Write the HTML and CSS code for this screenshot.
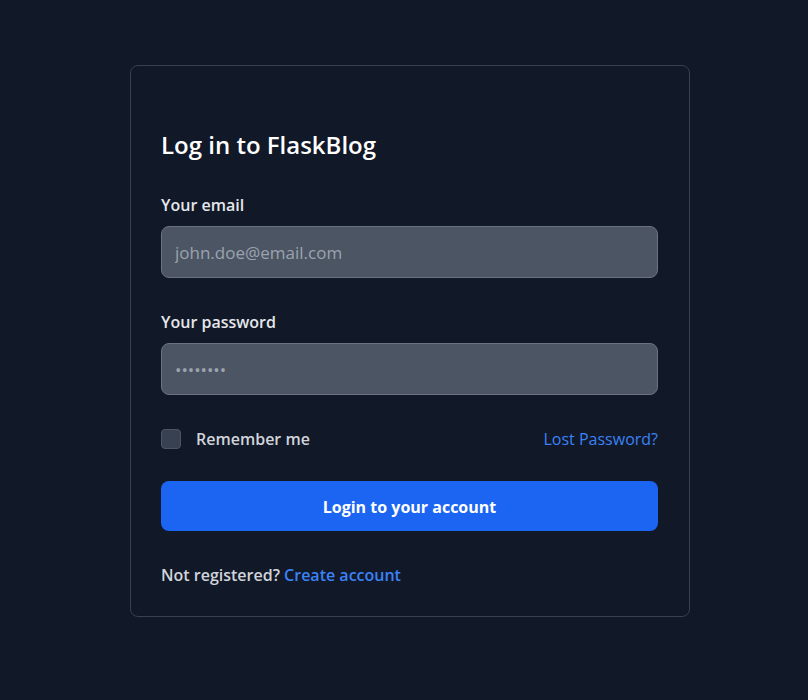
FILE: index.html
```html
<!DOCTYPE html>
<html lang="en">
<head>
<meta charset="utf-8">
<title>Log in to FlaskBlog</title>
<link rel="stylesheet" href="styles.css">
</head>
<body>
<main class="page">
  <form class="card">
    <h1 class="title">Log in to FlaskBlog</h1>
    <div class="field">
      <label class="label" for="email">Your email</label>
      <input class="input" id="email" type="email" placeholder="john.doe@email.com">
    </div>
    <div class="field">
      <label class="label" for="password">Your password</label>
      <input class="input pw" id="password" type="password" placeholder="••••••••">
    </div>
    <div class="row">
      <label class="remember"><span class="check"></span><span>Remember me</span></label>
      <a class="link lost" href="#">Lost Password?</a>
    </div>
    <button class="btn" type="button">Login to your account</button>
    <p class="footer">Not registered? <a class="link strong" href="#">Create account</a></p>
  </form>
</main>
</body>
</html>
```
FILE: styles.css
```css
* { box-sizing: border-box; }
html, body { margin: 0; padding: 0; }
body {
  background: #111827;
  font-family: "Open Sans", "Noto Sans", sans-serif;
  color: #d1d5db;
}
.page {
  display: flex;
  justify-content: center;
  padding: 65px 0 0 12px;
  min-height: 700px;
}
.card {
  width: 560px;
  height: 552px;
  border: 1px solid #374151;
  border-radius: 8px;
  background: #111827;
  padding: 63px 31px 30px 30px;
  display: flex;
  flex-direction: column;
}
.title {
  margin: 0;
  font-size: 24px;
  line-height: 32px;
  font-weight: 600;
  color: #ffffff;
}
.field {
  display: flex;
  flex-direction: column;
  margin-top: 32px;
}
.label {
  font-size: 16px;
  line-height: 24px;
  font-weight: 600;
  color: #e5e7eb;
  margin-bottom: 9px;
}
.input {
  height: 52px;
  width: 100%;
  background: #4b5563;
  border: 1px solid #6b7280;
  border-radius: 8px;
  padding: 0 13px;
  font-family: inherit;
  font-size: 17px;
  color: #fff;
  outline: none;
}
.input::placeholder { color: #9ca3af; }
.row {
  margin-top: 33px;
  display: flex;
  align-items: center;
  justify-content: space-between;
  height: 24px;
}
.remember {
  display: flex;
  align-items: center;
  gap: 15px;
  font-size: 16px;
  font-weight: 600;
  color: #d1d5db;
}
.check {
  width: 20px;
  height: 20px;
  border-radius: 4px;
  background: #374151;
  border: 1px solid #4b5563;
}
.link {
  color: #3b82f6;
  text-decoration: none;
}
.lost {
  font-size: 16px;
}
.strong { font-weight: 600; }
.btn {
  margin-top: 31px;
  height: 50px;
  flex: 0 0 50px;
  width: 100%;
  border: none;
  border-radius: 8px;
  background: #1c64f2;
  color: #fff;
  font-family: inherit;
  font-size: 16px;
  font-weight: 700;
  padding: 2px 0 0;
}
.footer {
  margin: 32px 0 0;
  font-size: 16px;
  line-height: 24px;
  font-weight: 600;
  color: #d1d5db;
}
```
